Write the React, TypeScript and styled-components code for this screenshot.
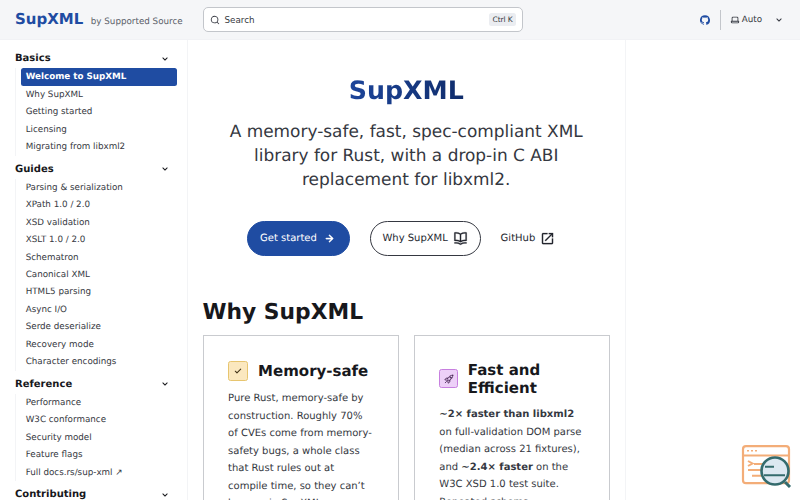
import React from 'react';
import styled, { createGlobalStyle } from 'styled-components';

const Global = createGlobalStyle`
  * { box-sizing: border-box; }
  html, body { margin: 0; padding: 0; overflow: hidden; }
  body {
    background: #fff;
    color: #353841;
    font-family: "DejaVu Sans", sans-serif;
    font-size: 10px;
    line-height: 1.75;
    text-rendering: geometricPrecision;
  }
  h1, h2, h3, p, ul { margin: 0; padding: 0; }
`;

const Page = styled.div`
  display: flex;
  flex-direction: column;
  width: 800px;
  height: 500px;
  overflow: hidden;
`;

const Header = styled.header`
  display: grid;
  grid-template-columns: 187.5px 320px 1fr;
  column-gap: 15px;
  align-items: center;
  flex: none;
  height: 40px;
  padding-right: 15px;
  background: #f5f6f8;
  border-bottom: 1px solid #f1f2f5;
`;

const Brand = styled.div`
  display: flex;
  align-items: baseline;
  gap: 7.5px;
  padding: 1.5px 0 0 15px;
  white-space: nowrap;
  line-height: 20px;
`;

const BrandName = styled.span`
  font-size: 15px;
  font-weight: 700;
  color: #1f4ca2;
`;

const BrandNote = styled.span`
  font-size: 8.75px;
  color: #5a5e68;
`;

const SearchBox = styled.button`
  display: flex;
  align-items: center;
  gap: 4.5px;
  height: 25px;
  padding: 0 5.5px 0 6.5px;
  border: 1px solid #c3c6cb;
  border-radius: 5px;
  background: #fff;
  color: #353841;
  font: 8.75px "DejaVu Sans", sans-serif;
`;

const SearchLabel = styled.span`
  flex: 1;
  text-align: left;
`;

const Keys = styled.kbd`
  padding: 0 3.5px;
  border-radius: 2.5px;
  background: #ebedf1;
  font: 7.5px/13px "DejaVu Sans", sans-serif;
  letter-spacing: -0.12px;
`;

const HeaderTools = styled.div`
  display: flex;
  align-items: center;
  justify-content: flex-end;
  color: #353841;
  font-size: 8.75px;
`;

const Divider = styled.span`
  width: 1px;
  height: 20px;
  margin: 0 9px 0 10px;
  background: #c3c6cb;
`;

const ThemeName = styled.span`
  margin: 0 11px 0 2px;
  padding-top: 1.5px;
`;

const Body = styled.div`
  display: grid;
  grid-template-columns: 188px 438px 1fr;
  flex: 1;
  min-height: 0;
`;

const Sidebar = styled.nav`
  padding: 10.3px 11px 0 15px;
  border-right: 1px solid #f3f4f6;
  overflow: hidden;
`;

const Group = styled.section`
  margin-bottom: 5px;
`;

const GroupTitle = styled.div`
  display: flex;
  align-items: center;
  justify-content: space-between;
  height: 17.5px;
  padding-right: 4.8px;
  color: #17181c;
  font-size: 10px;
  font-weight: 700;
`;

const Links = styled.ul`
  list-style: none;
  margin-top: 0.6px;
  border-left: 1px solid #f3f4f6;
  padding-left: 5px;
`;

const NavLink = styled.li<{ $active?: boolean }>`
  height: 17.46px;
  padding-left: 4.7px;
  border-radius: 2.5px;
  font-size: 8.75px;
  line-height: 18.6px;
  white-space: nowrap;
  font-weight: ${p => (p.$active ? 700 : 400)};
  color: ${p => (p.$active ? '#fff' : '#353841')};
  background: ${p => (p.$active ? '#1f4ca2' : 'transparent')};
  margin-right: ${p => (p.$active ? '-1px' : '0')};
`;

const Main = styled.main`
  padding: 0 15px 0 14.5px;
  border-right: 1px solid #f3f4f6;
  overflow: hidden;
`;

const Hero = styled.div`
  display: flex;
  flex-direction: column;
  align-items: center;
  padding-top: 35px;
  text-align: center;
`;

const HeroTitle = styled.h1`
  font-size: 25.3px;
  line-height: 32px;
  font-weight: 700;
  color: transparent;
  background: linear-gradient(90deg, #1d459a, #102d6c);
  background-clip: text;
`;

const Tagline = styled.p`
  width: 370px;
  margin-top: 12px;
  font-size: 16.95px;
  line-height: 24.2px;
`;

const Actions = styled.div`
  display: flex;
  gap: 20px;
  margin-top: 29.5px;
`;

const Action = styled.a<{ $kind: 'primary' | 'secondary' | 'minimal' }>`
  display: flex;
  align-items: center;
  gap: 5px;
  height: 35px;
  padding: 0 ${p => (p.$kind === 'minimal' ? '10px 0 0' : '11.8px')};
  border: ${p => (p.$kind === 'minimal' ? '0' : '1px')} solid ${p => (p.$kind === 'primary' ? '#1f4ca2' : '#353841')};
  border-radius: 18px;
  background: ${p => (p.$kind === 'primary' ? '#1f4ca2' : 'transparent')};
  color: ${p => (p.$kind === 'primary' ? '#fff' : '#24272f')};
  font-size: 10px;
`;

const SectionTitle = styled.h2`
  margin-top: 42.5px;
  font-size: 21.8px;
  line-height: 27px;
  color: #17181c;
`;

const Cards = styled.div`
  display: grid;
  grid-template-columns: 1fr 1fr;
  gap: 15px;
  margin-top: 9.5px;
`;

const Card = styled.article`
  height: 240px;
  padding: 24.6px 24px 0 24.6px;
  border: 1px solid #c9cbcf;
`;

const CardHead = styled.div`
  display: flex;
  align-items: center;
  gap: 10px;
`;

const CardTitle = styled.h3`
  font-size: 15px;
  line-height: 18px;
  color: #17181c;
`;

const Badge = styled.span<{ $fill: string; $line: string; $w: number }>`
  display: flex;
  flex: none;
  align-items: center;
  justify-content: center;
  width: ${p => p.$w}px;
  height: ${p => p.$w}px;
  border: 1px solid ${p => p.$line};
  border-radius: 2.5px;
  background: ${p => p.$fill};
`;

const CardText = styled.p`
  margin-top: 9.6px;
  white-space: nowrap;
`;

const Corner = styled.div`
  position: absolute;
  left: 741px;
  top: 444px;
  line-height: 0;
`;

const Icon = ({ size, children }: { size: number; children: React.ReactNode }) => (
  <svg width={size} height={size} viewBox="0 0 24 24" fill="currentColor">
    {children}
  </svg>
);

const Chevron = () => (
  <Icon size={12}>
    <path d="M17 9.17a1 1 0 0 0-1.41 0L12 12.71 8.46 9.17a1 1 0 1 0-1.41 1.42l4.24 4.24a1 1 0 0 0 1.42 0L17 10.59a1 1 0 0 0 0-1.42Z" />
  </Icon>
);

const groups = [
  { title: 'Basics', links: ['Welcome to SupXML', 'Why SupXML', 'Getting started', 'Licensing', 'Migrating from libxml2'] },
  {
    title: 'Guides',
    links: ['Parsing & serialization', 'XPath 1.0 / 2.0', 'XSD validation', 'XSLT 1.0 / 2.0', 'Schematron', 'Canonical XML', 'HTML5 parsing', 'Async I/O', 'Serde deserialize', 'Recovery mode', 'Character encodings'],
  },
  { title: 'Reference', links: ['Performance', 'W3C conformance', 'Security model', 'Feature flags', 'Full docs.rs/sup-xml ↗'] },
  { title: 'Contributing', links: [] },
];

export default function App() {
  return (
    <Page>
      <Global />
      <Header>
        <Brand>
          <BrandName>SupXML</BrandName>
          <BrandNote>by Supported Source</BrandNote>
        </Brand>
        <SearchBox>
          <Icon size={10}>
            <path d="M21.71 20.29 18 16.61A9 9 0 1 0 16.61 18l3.68 3.68a1 1 0 0 0 1.42 0 1 1 0 0 0 0-1.39ZM11 18a7 7 0 1 1 0-14 7 7 0 0 1 0 14Z" />
          </Icon>
          <SearchLabel>Search</SearchLabel>
          <Keys>Ctrl K</Keys>
        </SearchBox>
        <HeaderTools>
          <svg width="10" height="10" viewBox="0 0 24 24" fill="#1f4ca2">
            <path d="M12 .3a12 12 0 0 0-3.8 23.38c.6.12.83-.26.83-.57L9 21.07c-3.34.72-4.04-1.61-4.04-1.61-.55-1.39-1.34-1.76-1.34-1.76-1.08-.74.09-.73.09-.73 1.2.09 1.83 1.24 1.83 1.24 1.08 1.83 2.81 1.3 3.5 1 .1-.78.42-1.31.76-1.61-2.67-.3-5.47-1.33-5.47-5.93 0-1.31.47-2.38 1.24-3.22-.14-.3-.54-1.52.1-3.18 0 0 1-.32 3.3 1.23a11.5 11.5 0 0 1 6 0c2.28-1.55 3.29-1.23 3.29-1.23.64 1.66.24 2.88.12 3.18a4.65 4.65 0 0 1 1.23 3.22c0 4.61-2.8 5.63-5.48 5.92.42.36.81 1.1.81 2.22l-.01 3.29c0 .31.2.69.82.57A12 12 0 0 0 12 .3Z" />
          </svg>
          <Divider />
          <Icon size={10}>
            <path d="M21 14h-1V7a3 3 0 0 0-3-3H7a3 3 0 0 0-3 3v7H3a1 1 0 0 0-1 1v2a3 3 0 0 0 3 3h14a3 3 0 0 0 3-3v-2a1 1 0 0 0-1-1ZM6 7a1 1 0 0 1 1-1h10a1 1 0 0 1 1 1v7H6V7Zm14 10a1 1 0 0 1-1 1H5a1 1 0 0 1-1-1v-1h16v1Z" />
          </Icon>
          <ThemeName>Auto</ThemeName>
          <Chevron />
        </HeaderTools>
      </Header>
      <Body>
        <Sidebar>
          {groups.map(group => (
            <Group key={group.title}>
              <GroupTitle>
                {group.title}
                <Chevron />
              </GroupTitle>
              <Links>
                {group.links.map((link, i) => (
                  <NavLink key={link} $active={group.title === 'Basics' && i === 0}>{link}</NavLink>
                ))}
              </Links>
            </Group>
          ))}
        </Sidebar>
        <Main>
          <Hero>
            <HeroTitle>SupXML</HeroTitle>
            <Tagline>
              A memory-safe, fast, spec-compliant XML<br />library for Rust, with a drop-in C ABI<br />replacement for libxml2.
            </Tagline>
            <Actions>
              <Action $kind="primary">
                Get started
                <Icon size={15}>
                  <path d="M17.92 11.62a1 1 0 0 0-.21-.33l-5-5a1 1 0 0 0-1.42 1.42l3.3 3.29H7a1 1 0 0 0 0 2h7.59l-3.3 3.29a1 1 0 0 0 0 1.42 1 1 0 0 0 1.42 0l5-5a1 1 0 0 0 .21-.33 1 1 0 0 0 0-.76Z" stroke="currentColor" strokeWidth=".5" />
                </Icon>
              </Action>
              <Action $kind="secondary">
                Why SupXML
                <Icon size={15}>
                  <path d="M21.17 2.06A13.1 13.1 0 0 0 19 1.87a12.94 12.94 0 0 0-7 2.05 12.94 12.94 0 0 0-7-2c-.73 0-1.45.06-2.17.18a1 1 0 0 0-.83 1v12a1 1 0 0 0 1.17 1 10.9 10.9 0 0 1 8.25 1.91l.12.07h.11a.91.91 0 0 0 .76 0h.11l.12-.07A10.9 10.9 0 0 1 20.83 16 1 1 0 0 0 22 15V3a1 1 0 0 0-.83-.94ZM11 15.35a12.87 12.87 0 0 0-6-1.48H4v-10c.33-.02.67-.02 1 0a10.86 10.86 0 0 1 6 1.8v9.68Zm9-1.44h-1a12.87 12.87 0 0 0-6 1.48V5.67a10.86 10.86 0 0 1 6-1.8c.33-.02.67-.02 1 0v10.04Zm1.17 4.15a13.1 13.1 0 0 0-2.17-.19 12.94 12.94 0 0 0-7 2.05 12.94 12.94 0 0 0-7-2.05c-.73 0-1.45.06-2.17.19A1 1 0 0 0 2 19.21a1 1 0 0 0 1.17.79 10.9 10.9 0 0 1 8.25 1.91 1 1 0 0 0 1.16 0A10.9 10.9 0 0 1 20.83 20a1 1 0 0 0 1.17-.79 1 1 0 0 0-.83-1.15Z" stroke="currentColor" strokeWidth=".3" />
                </Icon>
              </Action>
              <Action $kind="minimal">
                GitHub
                <Icon size={15}>
                  <path d="M19 19H5V5h7V3H5a2 2 0 0 0-2 2v14a2 2 0 0 0 2 2h14a2 2 0 0 0 2-2v-7h-2v7ZM14 3v2h3.59l-9.83 9.83 1.41 1.41L19 6.41V10h2V3h-7Z" stroke="currentColor" strokeWidth=".3" />
                </Icon>
              </Action>
            </Actions>
          </Hero>
          <SectionTitle>Why SupXML</SectionTitle>
          <Cards>
            <Card>
              <CardHead>
                <Badge $fill="#fbe8bf" $line="#e7c56f" $w={20}>
                  <svg width="10" height="10" viewBox="0 0 24 24" fill="none" stroke="#44351a" strokeWidth="2.6" strokeLinecap="round" strokeLinejoin="round">
                    <path d="M5.500 12.500l4 4 9-9" />
                  </svg>
                </Badge>
                <CardTitle>Memory-safe</CardTitle>
              </CardHead>
              <CardText>
                Pure Rust, memory-safe by<br />construction. Roughly 70%<br />of CVEs come from memory-<br />safety bugs, a whole class<br />that Rust rules out at<br />compile time, so they can’t<br />happen in SupXML.
              </CardText>
            </Card>
            <Card>
              <CardHead>
                <Badge $fill="#edd0f8" $line="#c77fdf" $w={18.5}>
                  <svg width="10" height="10" viewBox="0 0 24 24" fill="none" stroke="#42204f" strokeWidth="2" strokeLinecap="round" strokeLinejoin="round">
                    <path d="M21 3c-5 0-9 2-13 9l4 4c7-4 9-8 9-13ZM9 10H5l-3 4 6 1M14 15v4l-4 3-1-6M3 21l3-3" />
                    <circle cx="15.5" cy="8.5" r="1.5" />
                  </svg>
                </Badge>
                <CardTitle>Fast and<br />Efficient</CardTitle>
              </CardHead>
              <CardText>
                <b>~2× faster than libxml2</b><br />on full-validation DOM parse<br />(median across 21 fixtures),<br />and <b>~2.4× faster</b> on the<br />W3C XSD 1.0 test suite.<br />Repeated schema
              </CardText>
            </Card>
          </Cards>
        </Main>
      </Body>
      <Corner>
        <svg width="52" height="44" viewBox="0 0 52 44" fill="none">
          <rect x="2" y="2.2" width="46" height="37" rx="3" stroke="#f3ad78" strokeWidth="2.2" />
          <path d="M2 11.500h46M7 17l4.500 2.500L7 22M13 20h12M7 26h14M11 31.800h11" stroke="#f3ad78" strokeWidth="2" />
          <path d="M6 6.800h2M10 6.800h2M14 6.800h2" stroke="#f3ad78" strokeWidth="1.500" />
          <path d="M44 38l5 5" stroke="#346b6d" strokeWidth="3" />
          <circle cx="34" cy="27" r="13.500" fill="#dce8f1" stroke="#346b6d" strokeWidth="2.600" />
          <path d="M24 22.800h9M23 31.200h21" stroke="#346b6d" strokeWidth="2" />
        </svg>
      </Corner>
    </Page>
  );
}
